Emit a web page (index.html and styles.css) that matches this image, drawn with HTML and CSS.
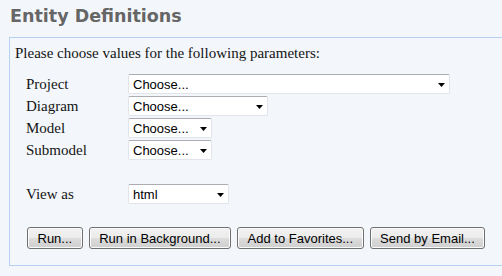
FILE: index.html
```html
<!DOCTYPE html>
<html lang="en">
<head>
    <meta charset="UTF-8">
    <title>Entity Definitions</title>
    <link rel="stylesheet" href="styles.css">
</head>
<body>
    <h1 class="page-title">Entity Definitions</h1>
    <div class="param-box">
        <p class="intro">Please choose values for the following parameters:</p>
        <div class="param-grid">
            <label class="param-label">Project</label>
            <div class="select select-project"><span>Choose...</span><svg class="arrow" width="7" height="4" viewBox="0 0 7 4"><path d="M0 0H7L3.5 4Z" fill="#000"/></svg></div>
            <label class="param-label">Diagram</label>
            <div class="select select-diagram"><span>Choose...</span><svg class="arrow" width="7" height="4" viewBox="0 0 7 4"><path d="M0 0H7L3.5 4Z" fill="#000"/></svg></div>
            <label class="param-label">Model</label>
            <div class="select select-small"><span>Choose...</span><svg class="arrow" width="7" height="4" viewBox="0 0 7 4"><path d="M0 0H7L3.5 4Z" fill="#000"/></svg></div>
            <label class="param-label">Submodel</label>
            <div class="select select-small"><span>Choose...</span><svg class="arrow" width="7" height="4" viewBox="0 0 7 4"><path d="M0 0H7L3.5 4Z" fill="#000"/></svg></div>
        </div>
        <div class="param-grid view-row">
            <label class="param-label">View as</label>
            <div class="select select-view"><span>html</span><svg class="arrow" width="7" height="4" viewBox="0 0 7 4"><path d="M0 0H7L3.5 4Z" fill="#000"/></svg></div>
        </div>
        <div class="button-row">
            <button class="btn">Run...</button>
            <button class="btn">Run in Background...</button>
            <button class="btn">Add to Favorites...</button>
            <button class="btn">Send by Email...</button>
        </div>
    </div>
</body>
</html>
```

FILE: styles.css
```css
html, body {
    margin: 0;
    padding: 0;
    overflow: hidden;
}
body {
    background-color: #f3f7fb;
    font-family: "Liberation Serif", "Times New Roman", serif;
    color: #141414;
}
.page-title {
    margin: 0;
    height: 37px;
    box-sizing: border-box;
    padding: 5px 10px 0;
    font-family: "DejaVu Sans", Verdana, sans-serif;
    font-size: 17.5px;
    line-height: 22px;
    font-weight: bold;
    color: #666666;
}
.param-box {
    margin: 0 0 0 9px;
    border: 1px solid #b4d2ef;
    border-right: none;
    padding: 6px 5px 16px;
}
.intro {
    margin: 0;
    font-size: 15px;
    line-height: 18px;
}
.param-grid {
    display: grid;
    grid-template-columns: 102px auto;
    row-gap: 2px;
    margin: 12px 0 0 11px;
    justify-items: start;
    align-items: center;
}
.view-row {
    margin-top: 24px;
}
.param-label {
    font-size: 15px;
    line-height: 20px;
}
.select {
    height: 20px;
    box-sizing: border-box;
    display: flex;
    align-items: center;
    justify-content: space-between;
    padding: 0 4px 0 4px;
    background-color: #ffffff;
    border: 1px solid #e1e4ea;
    border-top-color: #abadb3;
    border-radius: 2px;
    font-family: "Liberation Sans", Arial, sans-serif;
    font-size: 13px;
    color: #000;
}
.select-project { width: 322px; }
.select-diagram { width: 140px; }
.select-small { width: 84px; }
.select-view { width: 101px; }
.arrow {
    flex: none;
    margin-top: 1px;
}
.button-row {
    display: flex;
    gap: 6px;
    margin: 23px 0 0 12px;
}
.btn {
    height: 22px;
    padding: 0 9.5px;
    border: 1px solid #707070;
    border-radius: 3px;
    background: linear-gradient(#f2f2f2 0%, #ebebeb 50%, #dddddd 50%, #cfcfcf 100%);
    box-shadow: inset 0 0 0 1px #fbfbfb;
    font-family: "Liberation Sans", Arial, sans-serif;
    font-size: 13px;
    color: #000;
}
```
